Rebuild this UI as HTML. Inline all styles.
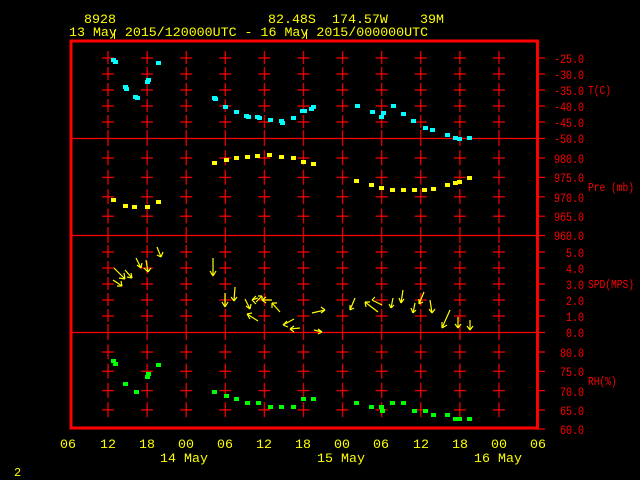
<!DOCTYPE html>
<html><head><meta charset="utf-8"><style>
html,body{margin:0;padding:0;background:#000;width:640px;height:480px;overflow:hidden}
svg{display:block}
text{font-family:"Liberation Mono",monospace;font-size:13.3px}
.y{fill:#ffff00}.r{fill:#ff0000}
.num text{font-size:12.5px}
.unit text{font-size:12px}
</style></head><body>
<svg width="640" height="480" viewBox="0 0 640 480" xmlns="http://www.w3.org/2000/svg">
<defs>
<pattern id="p16" patternUnits="userSpaceOnUse" width="39.1" height="16" x="88.45" y="50"><path d="M19.55 1V14M13.5 8H25.5" stroke="#f00" stroke-width="1.2"/></pattern>
<pattern id="pp" patternUnits="userSpaceOnUse" width="39.1" height="19.4" x="88.45" y="148.3"><path d="M19.55 2V17M13.5 9.7H25.5" stroke="#f00" stroke-width="1.2"/></pattern>
<pattern id="ps" patternUnits="userSpaceOnUse" width="39.1" height="16" x="88.45" y="244"><path d="M19.55 1V14M13.5 8H25.5" stroke="#f00" stroke-width="1.2"/></pattern>
<pattern id="pr" patternUnits="userSpaceOnUse" width="39.1" height="19.3" x="88.45" y="342.35"><path d="M19.55 2V17M13.5 9.65H25.5" stroke="#f00" stroke-width="1.2"/></pattern>
<pattern id="pv" patternUnits="userSpaceOnUse" width="39.1" height="20" x="88.45" y="0"><path d="M19.55 0V20" stroke="#f00" stroke-width="1.2"/></pattern>
</defs>
<text x="84" y="23" class="y">8928</text>
<text x="268" y="23" class="y">82.48S</text>
<text x="332" y="23" class="y">174.57W</text>
<text x="420" y="23" class="y">39M</text>
<text x="69" y="36" class="y">13 May 2015/120000UTC - 16 May 2015/000000UTC</text>
<path d="M114.5 30V39M306.5 30V39" stroke="#ff0" stroke-width="1"/>
<rect x="88.45" y="50" width="430.1" height="80" fill="url(#p16)"/>
<rect x="88.45" y="148.3" width="430.1" height="77.6" fill="url(#pp)"/>
<rect x="88.45" y="244" width="430.1" height="80" fill="url(#ps)"/>
<rect x="88.45" y="342.35" width="430.1" height="77.2" fill="url(#pr)"/>
<rect x="88.45" y="130" width="430.1" height="16" fill="url(#pv)"/>
<rect x="88.45" y="227" width="430.1" height="16" fill="url(#pv)"/>
<rect x="88.45" y="324" width="430.1" height="16" fill="url(#pv)"/>
<path d="M71 138.5H545M71 235.5H545M71 332.5H545" stroke="#f00" stroke-width="1.2"/>
<rect x="71" y="41" width="466.5" height="387" fill="none" stroke="#f00" stroke-width="3"/>
<path stroke="#f00" stroke-width="1.2" d="M537 58H545M537 74H545M537 90H545M537 106H545M537 122H545M537 158H545M537 177.4H545M537 196.8H545M537 216.2H545M537 252H545M537 268H545M537 284H545M537 300H545M537 316H545M537 352H545M537 371.3H545M537 390.6H545M537 410H545M537 429H545"/>
<g class="r num" text-anchor="end" transform="scale(0.8,1)">
<text x="730" y="63">-25.0</text><text x="730" y="79">-30.0</text><text x="730" y="95">-35.0</text><text x="730" y="111">-40.0</text><text x="730" y="127">-45.0</text><text x="730" y="143">-50.0</text>
<text x="730" y="163">980.0</text><text x="730" y="182">975.0</text><text x="730" y="202">970.0</text><text x="730" y="221">965.0</text><text x="730" y="240">960.0</text>
<text x="730" y="257">5.0</text><text x="730" y="273">4.0</text><text x="730" y="289">3.0</text><text x="730" y="305">2.0</text><text x="730" y="321">1.0</text><text x="730" y="337">0.0</text>
<text x="730" y="357">80.0</text><text x="730" y="376">75.0</text><text x="730" y="396">70.0</text><text x="730" y="415">65.0</text><text x="730" y="434">60.0</text>
</g>
<g class="r unit" transform="scale(0.8,1)">
<text x="735" y="94">T(C)</text><text x="735" y="191">Pre (mb)</text><text x="735" y="288">SPD(MPS)</text><text x="735" y="385">RH(%)</text>
</g>
<g class="y" text-anchor="middle">
<text x="68" y="448">06</text><text x="108" y="448">12</text><text x="147" y="448">18</text><text x="186" y="448">00</text><text x="225" y="448">06</text><text x="264" y="448">12</text><text x="303" y="448">18</text><text x="342" y="448">00</text><text x="381" y="448">06</text><text x="421" y="448">12</text><text x="460" y="448">18</text><text x="499" y="448">00</text><text x="538" y="448">06</text>
<text x="184" y="462">14 May</text><text x="341" y="462">15 May</text><text x="498" y="462">16 May</text>
</g>
<text x="14" y="476" class="y" style="font-size:12px">2</text>
<g fill="#00ffff">
<rect x="111" y="58" width="5" height="4"/><rect x="113" y="60" width="5" height="4"/><rect x="123" y="85" width="5" height="4"/><rect x="124" y="87" width="5" height="4"/><rect x="133" y="95" width="5" height="4"/><rect x="135" y="96" width="5" height="4"/><rect x="145" y="80" width="5" height="4"/><rect x="146" y="78" width="5" height="4"/><rect x="156" y="61" width="5" height="4"/>
<rect x="212" y="96" width="5" height="4"/><rect x="213" y="97" width="5" height="4"/><rect x="223" y="105" width="5" height="4"/><rect x="234" y="110" width="5" height="4"/><rect x="244" y="114" width="5" height="4"/><rect x="246" y="115" width="5" height="4"/><rect x="255" y="115" width="5" height="4"/><rect x="257" y="116" width="5" height="4"/><rect x="268" y="118" width="5" height="4"/><rect x="279" y="119" width="5" height="4"/><rect x="280" y="121" width="5" height="4"/><rect x="291" y="116" width="5" height="4"/><rect x="300" y="109" width="5" height="4"/><rect x="302" y="109" width="5" height="4"/><rect x="309" y="107" width="5" height="4"/><rect x="311" y="105" width="5" height="4"/>
<rect x="355" y="104" width="5" height="4"/><rect x="370" y="110" width="5" height="4"/><rect x="379" y="115" width="5" height="4"/><rect x="381" y="111" width="5" height="4"/><rect x="391" y="104" width="5" height="4"/><rect x="401" y="112" width="5" height="4"/><rect x="411" y="119" width="5" height="4"/><rect x="423" y="126" width="5" height="4"/><rect x="430" y="128" width="5" height="4"/><rect x="445" y="133" width="5" height="4"/><rect x="453" y="136" width="5" height="4"/><rect x="457" y="137" width="5" height="4"/><rect x="467" y="136" width="5" height="4"/>
</g>
<g fill="#ffff00">
<rect x="111" y="198" width="5" height="4"/><rect x="123" y="204" width="5" height="4"/><rect x="132" y="205" width="5" height="4"/><rect x="145" y="205" width="5" height="4"/><rect x="156" y="200" width="5" height="4"/>
<rect x="212" y="161" width="5" height="4"/><rect x="224" y="158" width="5" height="4"/><rect x="234" y="156" width="5" height="4"/><rect x="245" y="155" width="5" height="4"/><rect x="255" y="154" width="5" height="4"/><rect x="267" y="153" width="5" height="4"/><rect x="279" y="155" width="5" height="4"/><rect x="291" y="156" width="5" height="4"/><rect x="301" y="160" width="5" height="4"/><rect x="311" y="162" width="5" height="4"/>
<rect x="354" y="179" width="5" height="4"/><rect x="369" y="183" width="5" height="4"/><rect x="379" y="186" width="5" height="4"/><rect x="390" y="188" width="5" height="4"/><rect x="401" y="188" width="5" height="4"/><rect x="412" y="188" width="5" height="4"/><rect x="422" y="188" width="5" height="4"/><rect x="431" y="187" width="5" height="4"/><rect x="445" y="183" width="5" height="4"/><rect x="453" y="181" width="5" height="4"/><rect x="457" y="180" width="5" height="4"/><rect x="467" y="176" width="5" height="4"/>
</g>
<g fill="#00ff00">
<rect x="111" y="359" width="5" height="4"/><rect x="113" y="362" width="5" height="4"/><rect x="123" y="382" width="5" height="4"/><rect x="134" y="390" width="5" height="4"/><rect x="145" y="375" width="5" height="4"/><rect x="146" y="372" width="5" height="4"/><rect x="156" y="363" width="5" height="4"/>
<rect x="212" y="390" width="5" height="4"/><rect x="224" y="394" width="5" height="4"/><rect x="234" y="397" width="5" height="4"/><rect x="245" y="401" width="5" height="4"/><rect x="256" y="401" width="5" height="4"/><rect x="268" y="405" width="5" height="4"/><rect x="279" y="405" width="5" height="4"/><rect x="291" y="405" width="5" height="4"/><rect x="301" y="397" width="5" height="4"/><rect x="311" y="397" width="5" height="4"/>
<rect x="354" y="401" width="5" height="4"/><rect x="369" y="405" width="5" height="4"/><rect x="379" y="405" width="5" height="4"/><rect x="380" y="409" width="5" height="4"/><rect x="390" y="401" width="5" height="4"/><rect x="401" y="401" width="5" height="4"/><rect x="412" y="409" width="5" height="4"/><rect x="423" y="409" width="5" height="4"/><rect x="431" y="413" width="5" height="4"/><rect x="445" y="413" width="5" height="4"/><rect x="453" y="417" width="5" height="4"/><rect x="457" y="417" width="5" height="4"/><rect x="467" y="417" width="5" height="4"/>
</g>
<g stroke="#ffff00" stroke-width="1.2" fill="none">
<path d="M114 268L125 279M125 279L119 278M125 279L124 273"/>
<path d="M113 280L122 286M122 286L117 286M122 286L121 281"/>
<path d="M125 270L132 278M132 278L127 277M132 278L131 273"/>
<path d="M136 258L141 268M141 268L137 265M141 268L142 263"/>
<path d="M146 260L148 272M148 272L144 268M148 272L151 268"/>
<path d="M157 247L161 257M161 257L157 255M161 257L163 252"/>
<path d="M213 258L213 276M213 276L210 271M213 276L216 271"/>
<path d="M225 293L225 307M225 307L222 302M225 307L228 302"/>
<path d="M235 287L234 301M234 301L231 297M234 301L237 297"/>
<path d="M245 299L250 309M250 309L246 306M250 309L251 304"/>
<path d="M252 300L258 298M252 300L256 296M252 300L256 304"/>
<path d="M256 302L262 296M262 296L258 296M262 296L262 300"/>
<path d="M262 300L272 300M262 300L266 297M262 300L266 303"/>
<path d="M247 314L258 321M247 314L250 319M247 314L252 313"/>
<path d="M272 303L280 312M272 303L272 308M272 303L277 303"/>
<path d="M283 325L294 319M283 325L287 321M283 325L288 327"/>
<path d="M290 329L300 328M290 329L294 326M290 329L294 332"/>
<path d="M312 313L325 310M325 310L321 307M325 310L321 313"/>
<path d="M314 330L322 332M322 332L318 329M322 332L318 334"/>
<path d="M355 298L350 310M350 310L350 305M350 310L354 308"/>
<path d="M365 302L378 312M365 302L366 307M365 302L370 302"/>
<path d="M372 300L382 305M372 300L375 297"/>
<path d="M393 298L391 308M391 308L389 304M391 308L394 305"/>
<path d="M403 290L401 303M401 303L399 298M401 303L404 299"/>
<path d="M415 303L413 313M413 313L411 308M413 313L416 310"/>
<path d="M424 292L419 304M419 304L419 299M419 304L423 302"/>
<path d="M430 300L432 313M432 313L429 309M432 313L435 309"/>
<path d="M450 310L442 328M442 328L442 322M442 328L447 325"/>
<path d="M458 317L458 328M458 328L455 324M458 328L461 324"/>
<path d="M470 320L470 330M470 330L467 326M470 330L473 326"/>
</g>
</svg>
</body></html>
